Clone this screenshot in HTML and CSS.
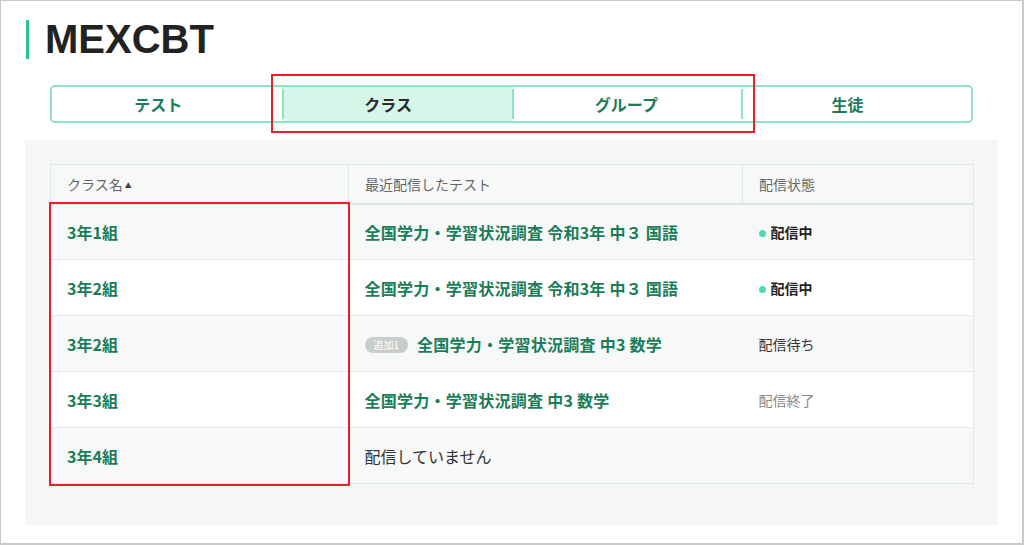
FILE: index.html
```html
<!DOCTYPE html>
<html lang="ja">
<head>
  <meta charset="UTF-8">
  <meta name="viewport" content="width=device-width, initial-scale=1.0" />
  <title>MEXCBT</title>
  <link rel="stylesheet" href="styles.css">
</head>
<body>
  <div class="frame">
    <h1 class="title">MEXCBT</h1>

    <nav class="tabs">
      <a class="tab"><span class="label">テスト</span></a>
      <a class="tab active"><span class="label">クラス</span></a>
      <a class="tab"><span>グループ</span></a>
      <a class="tab"><span class="label">生徒</span></a>
    </nav>

    <div class="panel">
      <table class="list">
        <thead>
          <tr>
            <th class="col-name">クラス名<span class="sort">▲</span></th>
            <th class="col-test">最近配信したテスト</th>
            <th class="col-status">配信状態</th>
          </tr>
        </thead>
        <tbody>
          <tr>
            <td class="name">3年1組</td>
            <td class="test">全国学力・学習状況調査 令和3年 中３ 国語</td>
            <td class="status live"><span class="dot"></span>配信中</td>
          </tr>
          <tr>
            <td class="name">3年2組</td>
            <td class="test">全国学力・学習状況調査 令和3年 中３ 国語</td>
            <td class="status live"><span class="dot"></span>配信中</td>
          </tr>
          <tr>
            <td class="name">3年2組</td>
            <td class="test"><span class="badge">追加1</span>全国学力・学習状況調査 中3 数学</td>
            <td class="status waiting">配信待ち</td>
          </tr>
          <tr>
            <td class="name">3年3組</td>
            <td class="test">全国学力・学習状況調査 中3 数学</td>
            <td class="status done">配信終了</td>
          </tr>
          <tr>
            <td class="name">3年4組</td>
            <td class="none">配信していません</td>
            <td></td>
          </tr>
        </tbody>
      </table>
    </div>

    <!-- annotation boxes -->
    <div class="mark mark-tabs"></div>
    <div class="mark mark-names"></div>
  </div>
</body>
</html>
```

FILE: styles.css
```css
* {
  box-sizing: border-box;
}

body {
  margin: 0;
  font-family: "Noto Sans CJK JP", "Noto Sans", sans-serif;
  color: #333;
  background: #fff;
}

.frame {
  position: relative;
  width: 1024px;
  height: 545px;
  border: 1px solid #c9c9c9;
  border-right-width: 2px;
  border-bottom-width: 2px;
  overflow: hidden;
}

.title {
  margin: 19px 0 0 25px;
  padding-left: 16px;
  border-left: 3px solid #2fc48f;
  height: 39px;
  line-height: 39px;
  font-family: "Liberation Sans", "Noto Sans", sans-serif;
  font-size: 40px;
  font-weight: 700;
  color: #222;
}

.tabs {
  display: flex;
  margin: 26px 49px 0 49px;
  height: 38px;
  border: 2px solid #8fe2c3;
  border-radius: 5px;
}

.tab {
  position: relative;
  width: 25%;
  display: flex;
  align-items: center;
  justify-content: center;
  font-size: 16px;
  font-weight: 700;
  color: #1b7d58;
}

.tab .label {
  margin-right: 17px;
}

.tab + .tab::before {
  content: "";
  position: absolute;
  left: 0;
  top: 2px;
  bottom: 2px;
  width: 2px;
  background: #8fe2c3;
}

.tab.active {
  background: #d7f6ea;
  color: #2a2a2a;
}

.panel {
  margin: 17px 24px 0 24px;
  padding: 24px 24px 41px 25px;
  background: #f5f7f7;
}

.list {
  width: 100%;
  border-collapse: collapse;
  border: 1px solid #e2e8ea;
  font-size: 16px;
}

.list th {
  height: 39px;
  padding: 0 16px;
  text-align: left;
  font-size: 14px;
  font-weight: 400;
  color: #666;
  background: #f7f9f9;
  border-left: 1px solid #e2e8ea;
  border-bottom: 2px solid #dfe5e7;
}

.col-name {
  width: 298px;
}

.col-status {
  width: 231px;
}

.sort {
  font-size: 7px;
  margin-left: 2px;
  vertical-align: 2px;
  color: #444;
}

.list td {
  height: 56px;
  padding: 0 16px;
  border-top: 1px solid #e3e8eb;
}

.list tbody tr:nth-child(odd) td {
  background: #f7f9f9;
}

.list tbody tr:nth-child(even) td {
  background: #fff;
}

.name,
.test {
  font-weight: 700;
  color: #1b7d58;
}

.test {
  letter-spacing: 0.25px;
}

.badge {
  display: inline-block;
  margin-right: 9px;
  padding: 0 9px;
  height: 16px;
  line-height: 16px;
  border-radius: 8px;
  background: #c6cdcb;
  color: #fff;
  font-size: 10px;
  font-weight: 400;
  letter-spacing: 0;
  vertical-align: 2px;
}

.status {
  font-size: 14px;
}

.status.live {
  font-weight: 700;
  color: #222;
}

.dot {
  display: inline-block;
  width: 7px;
  height: 7px;
  margin-right: 5px;
  border-radius: 50%;
  background: #4fd9b6;
  vertical-align: 1px;
}

.status.waiting {
  color: #333;
}

.status.done {
  color: #888;
}

.none {
  color: #333;
}

.mark {
  position: absolute;
  border: 2px solid #e8202a;
}

.mark-tabs {
  left: 270px;
  top: 73px;
  width: 484px;
  height: 59px;
}

.mark-names {
  left: 48px;
  top: 201px;
  width: 301px;
  height: 284px;
}
```
